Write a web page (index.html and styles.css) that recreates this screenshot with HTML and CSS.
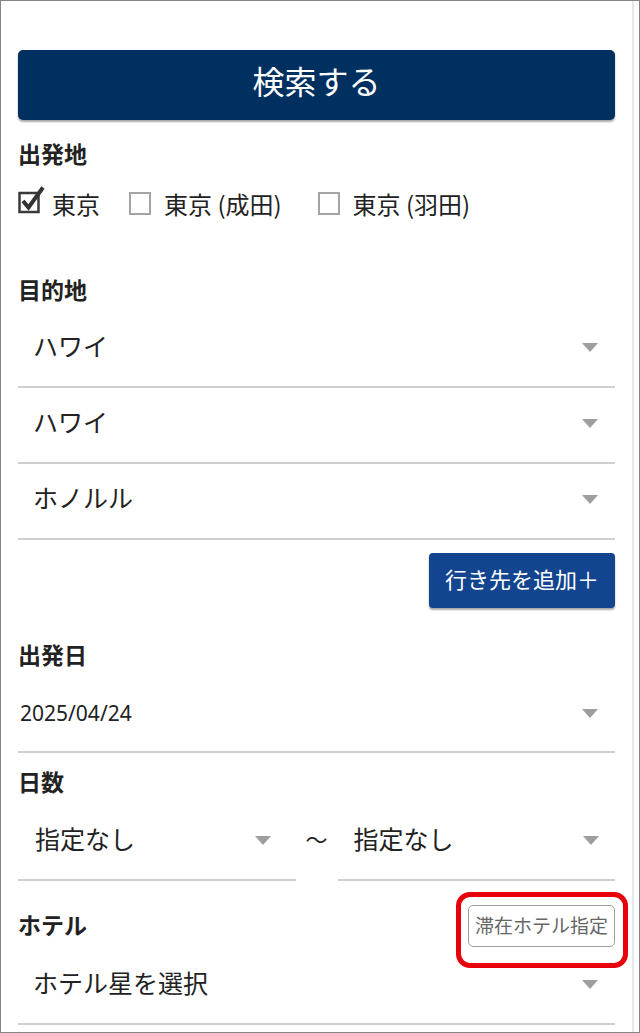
FILE: index.html
```html
<!DOCTYPE html>
<html lang="ja">
<head>
<meta charset="utf-8">
<title>検索</title>
<link rel="stylesheet" href="styles.css">
</head>
<body>
<div class="frame">
  <div class="page">
    <button class="search-btn">検索する</button>

    <div class="label label-origin">出発地</div>
    <div class="checks">
      <label class="check">
        <svg class="cb-checked" width="30" height="30" viewBox="0 0 30 30">
          <rect x="1.5" y="8" width="19" height="19" fill="#fff" stroke="#3a3a3a" stroke-width="2.5"/>
          <path d="M5 16 L10.5 22.5 L25 2.5" fill="none" stroke="#333" stroke-width="4" stroke-linejoin="miter"/>
        </svg>
        <span>東京</span>
      </label>
      <label class="check">
        <span class="cb"></span>
        <span>東京 (成田)</span>
      </label>
      <label class="check">
        <span class="cb"></span>
        <span>東京 (羽田)</span>
      </label>
    </div>

    <div class="label label-dest">目的地</div>
    <div class="select first"><span>ハワイ</span><i class="arrow"></i></div>
    <div class="select"><span>ハワイ</span><i class="arrow"></i></div>
    <div class="select"><span>ホノルル</span><i class="arrow"></i></div>

    <div class="add-row"><button class="add-btn">行き先を追加＋</button></div>

    <div class="label label-date">出発日</div>
    <div class="select date"><span>2025/04/24</span><i class="arrow"></i></div>

    <div class="label label-days">日数</div>
    <div class="days">
      <div class="select half"><span>指定なし</span><i class="arrow"></i></div>
      <span class="tilde">～</span>
      <div class="select half"><span>指定なし</span><i class="arrow"></i></div>
    </div>

    <div class="hotel-row">
      <div class="label">ホテル</div>
      <div class="hotel-btn-wrap">
        <button class="hotel-btn">滞在ホテル指定</button>
        <span class="highlight"></span>
      </div>
    </div>
    <div class="select hotel"><span>ホテル星を選択</span><i class="arrow"></i></div>
  </div>
</div>
</body>
</html>
```

FILE: styles.css
```css
* { box-sizing: border-box; }
html, body { margin: 0; padding: 0; background: #fff; }
body {
  font-family: "Noto Sans", "Noto Sans CJK JP", sans-serif;
  color: #222;
}
.frame {
  width: 640px;
  height: 1033px;
  border: 1px solid #858585;
  overflow: hidden;
}
.page {
  width: 633px;
  height: 100%;
  border-right: 2px solid #e3e7ee;
  padding: 49px 17px 0 17px;
}
button { font-family: inherit; cursor: pointer; }
.search-btn {
  display: block;
  width: 100%;
  height: 70px;
  border: none;
  border-radius: 5px;
  background: #00305f;
  color: #fff;
  font-size: 32px;
  font-family: "Noto Sans CJK JP", sans-serif;
  box-shadow: 0 2px 2px rgba(0,0,0,0.35);
  padding: 0 0 10px;
}
.label {
  font-family: "Noto Sans CJK JP", sans-serif;
  font-weight: 700;
  font-size: 23px;
  line-height: 26px;
  height: 30px;
  color: #222;
}
.label-origin { margin-top: 20px; }
.checks {
  display: flex;
  align-items: center;
  height: 36px;
  margin-top: 15px;
  font-family: "Noto Sans CJK JP", sans-serif;
  font-size: 24px;
}
.check {
  display: flex;
  align-items: center;
}
.check + .check { margin-left: 29px; }
.check + .check + .check { margin-left: 36px; }
.cb-checked { margin-right: 4px; margin-top: -6px; }
.cb {
  width: 22px;
  height: 23px;
  border: 2px solid #a4a4a4;
  margin-right: 13px;
  background: #fff;
}
.label-dest { margin-top: 55px; }
.select {
  height: 76px;
  border-bottom: 2px solid #cfcfcf;
  display: flex;
  align-items: center;
  justify-content: space-between;
  padding: 0 17px 8px 15px;
  font-family: "Noto Sans CJK JP", sans-serif;
  font-size: 25px;
  color: #222;
}
.select.first { margin-top: 6px; }
.arrow {
  width: 0;
  height: 0;
  border-left: 8px solid transparent;
  border-right: 8px solid transparent;
  border-top: 9px solid #9e9e9e;
  margin-top: 4px;
}
.add-row {
  display: flex;
  justify-content: flex-end;
  margin-top: 13px;
}
.add-btn {
  width: 186px;
  height: 55px;
  border: none;
  border-radius: 4px;
  background: #12448f;
  color: #fff;
  font-size: 22px;
  font-family: "Noto Sans CJK JP", sans-serif;
  box-shadow: 0 2px 2px rgba(0,0,0,0.35);
  padding: 0 0 6px;
}
.label-date { margin-top: 33px; }
.select.date {
  margin-top: 6px;
  padding: 0 17px 2px 2px;
  font-family: "Noto Sans", sans-serif;
  font-size: 21px;
}
.select.date .arrow { margin-top: 0; }
.label-days { margin-top: 15px; }
.days {
  display: grid;
  grid-template-columns: 1fr auto 1fr;
  column-gap: 10px;
  align-items: center;
  margin-top: 7px;
}
.select.half { padding-left: 17px; padding-right: 25px; }
.days .select.half:last-child { padding-left: 16px; padding-right: 16px; }
.tilde {
  font-family: "Noto Sans CJK JP", sans-serif;
  font-size: 22px;
  width: 22px;
  margin: 0 0 10px;
}
.hotel-row {
  display: flex;
  justify-content: space-between;
  align-items: center;
  height: 43px;
  margin-top: 23px;
}
.hotel-btn-wrap { position: relative; }
.hotel-btn {
  display: block;
  width: 147px;
  height: 42px;
  background: #fff;
  border: 1.5px solid #a0a0a0;
  border-radius: 5px;
  color: #666;
  font-size: 19px;
  font-family: "Noto Sans CJK JP", sans-serif;
  padding: 0 0 3px;
  white-space: nowrap;
}
.highlight {
  position: absolute;
  left: -12px;
  right: -13px;
  top: -13px;
  bottom: -21px;
  border: 5px solid #e8000b;
  border-radius: 14px;
  pointer-events: none;
}
.select.hotel { margin-top: 2px; }
```
